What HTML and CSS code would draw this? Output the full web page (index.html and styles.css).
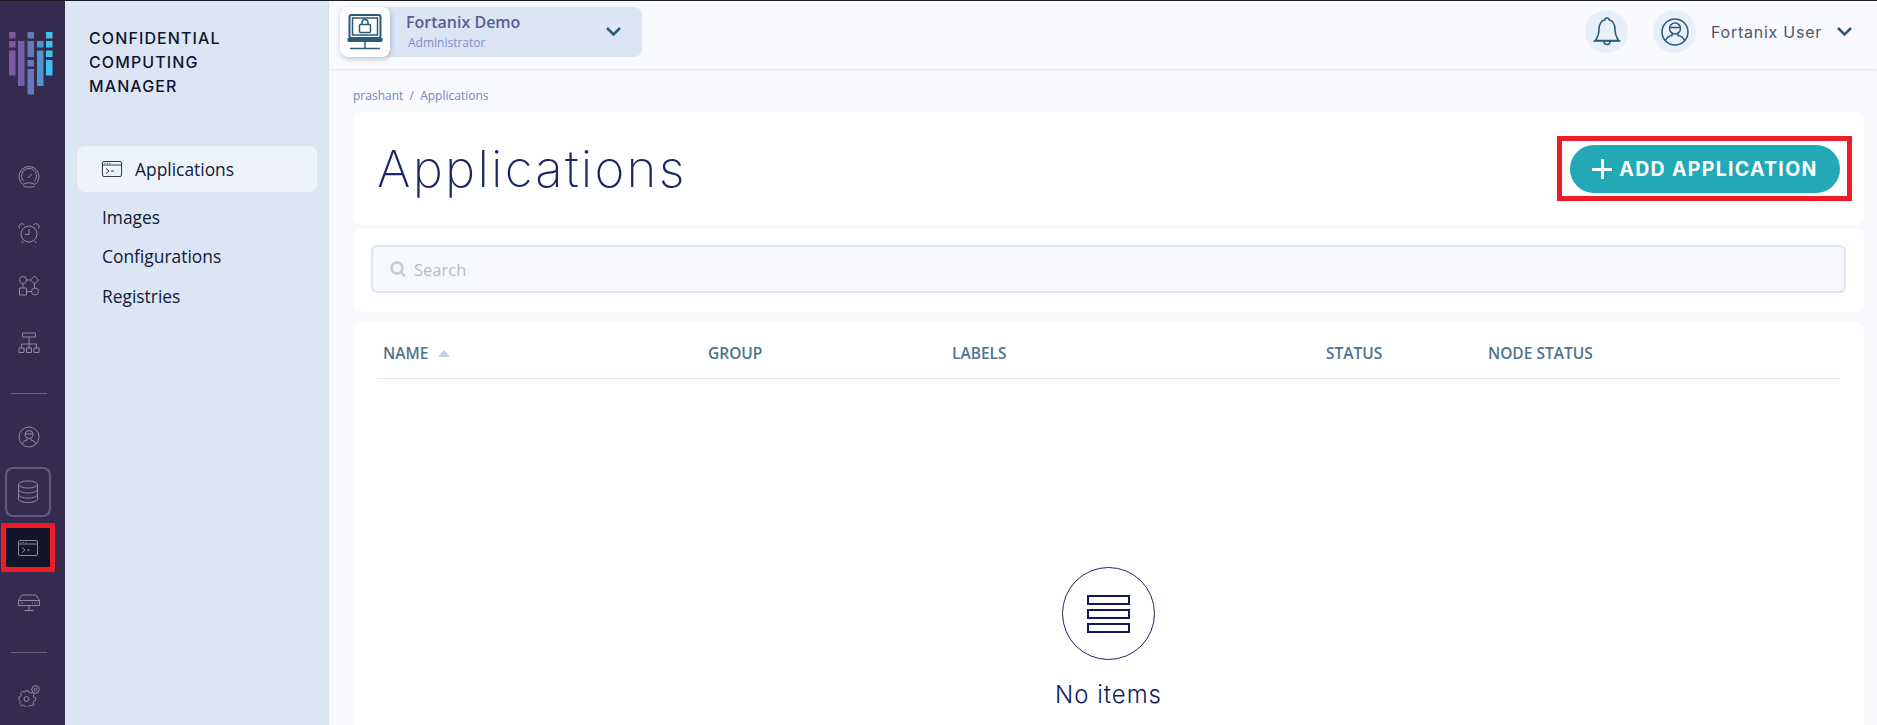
FILE: index.html
```html
<!DOCTYPE html>
<html lang="en">
<head>
  <meta charset="UTF-8">
  <meta name="viewport" content="width=device-width, initial-scale=1.0">
  <link rel="stylesheet" href="styles.css">
  <title>Applications</title>
</head>
<body>

<div class="app">
  <!-- Icon rail -->
  <nav class="rail">
    <svg class="logo" viewBox="0 0 44 63" width="44" height="63">
      <rect x="0" y="0" width="6.5" height="6.5" fill="#7d59a4"/>
      <rect x="0" y="9" width="6.5" height="6.5" fill="#7d59a4"/>
      <rect x="0" y="18.5" width="6.5" height="25" fill="#7d59a4"/>
      <rect x="9" y="9" width="6.5" height="45" fill="#7261aa"/>
      <rect x="18.5" y="0" width="6.5" height="6.5" fill="#6a78ba"/>
      <rect x="18.5" y="9" width="6.5" height="16" fill="#6a78ba"/>
      <rect x="18.5" y="28" width="6.5" height="6.5" fill="#6a78ba"/>
      <rect x="18.5" y="37" width="6.5" height="25.5" fill="#6a78ba"/>
      <rect x="28" y="9" width="6.5" height="6.5" fill="#4f94cc"/>
      <rect x="28" y="18.5" width="6.5" height="35.5" fill="#4f94cc"/>
      <rect x="37" y="0" width="6.5" height="6.5" fill="#3fc0ee"/>
      <rect x="37" y="9" width="6.5" height="6.5" fill="#3fc0ee"/>
      <rect x="37" y="18.5" width="6.5" height="6.5" fill="#3fc0ee"/>
      <rect x="37" y="28" width="6.5" height="15.5" fill="#3fc0ee"/>
    </svg>

    <div class="rail-item rail-gauge">
      <svg viewBox="0 0 22 22" width="22" height="22">
        <path d="M5 18.5a10 10 0 1 1 12 0"/>
        <path d="M6 15.5a7.5 7.5 0 1 1 10 0"/>
        <path d="M10 12l4-4M5 18.5q6-3.500 12 0M5.500 20.500q5.500 1.500 11 0"/>
      </svg>
    </div>
    <div class="rail-item">
      <svg viewBox="0 0 22 22" width="22" height="22">
        <circle cx="11" cy="12" r="8"/>
        <path d="M11 7v5.500H7M1.500 6.500a3 3 0 0 1 5-3.500M20.500 6.500a3 3 0 0 0-5-3.500M5 19l-1 2M17 19l1 2"/>
      </svg>
    </div>
    <div class="rail-item rail-flow">
      <svg viewBox="0 0 22 22" width="22" height="22">
        <circle cx="5" cy="5" r="3.500"/>
        <path d="M16.500 1l4 4-4 4-4-4zM1.500 13h7v7h-7zM8.500 5h4M8.500 16.500h5M5 8.500V13M16.500 9v4"/>
        <circle cx="17" cy="16.500" r="3.500"/>
      </svg>
    </div>
    <div class="rail-item rail-org">
      <svg viewBox="0 0 22 22" width="22" height="22">
        <path d="M4.500 1h13v4h-13zM11 5v11M3.500 16v-4h15v4M1 16h5v4.500H1zM8.500 16h5v4.500h-5zM16 16h5v4.500h-5z"/>
      </svg>
    </div>

    <div class="rail-line"></div>

    <div class="rail-item">
      <svg viewBox="0 0 22 22" width="22" height="22">
        <circle cx="11" cy="11" r="10"/>
        <circle cx="11" cy="8.500" r="4"/>
        <path d="M7 8h8M9 12.500v1.500q-4 .5-5 4M13 12.500v1.500q4 .5 5 4"/>
      </svg>
    </div>
    <div class="rail-box">
      <svg viewBox="0 0 22 24" width="22" height="24">
        <ellipse cx="11" cy="4.500" rx="9.500" ry="3.500"/>
        <path d="M1.500 4.500v14.500c0 2 4.500 3.500 9.500 3.500s9.500-1.500 9.500-3.500V4.500M1.500 9.500c0 2 4.500 3.500 9.500 3.500s9.500-1.500 9.500-3.500M1.500 14.500c0 2 4.500 3.500 9.500 3.500s9.500-1.500 9.500-3.500"/>
      </svg>
    </div>
    <div class="rail-marked">
      <div class="rail-active">
        <svg viewBox="0 0 20 16" width="20" height="16">
          <rect x="0.500" y="0.500" width="19" height="15" rx="1.500"/>
          <path d="M0.500 4h19M4 7.500l3 2.500-3 2.500M9 10h3M2.500 2.300h1M5 2.300h1M7.500 2.300h1"/>
        </svg>
      </div>
    </div>
    <div class="rail-item rail-server">
      <svg viewBox="0 0 22 18" width="22" height="18">
        <path d="M0.500 6.500L4 1h14l3.500 5.500v5h-21zM0.500 6.500h21M11 11.500v5M6.500 16.500h9M3 9h2M14 9h1M16.500 9h1M19 9h1"/>
      </svg>
    </div>

    <div class="rail-line"></div>

    <div class="rail-item">
      <svg viewBox="0 0 22 22" width="22" height="22">
        <circle cx="8.500" cy="14" r="2.500"/>
        <path d="M7 6.500h3l.5 1.800 1.600.7 1.700-.9 2.100 2.100-.9 1.700.7 1.600 1.800.5v3l-1.800.5-.7 1.600.9 1.700-2.100 1.700-1.700-.6-1.600.7-.5 1.300H7l-.5-1.500-1.600-.7-1.700.7-2.100-2.100.9-1.700-.7-1.600L.5 16v-3l1.800-.5.7-1.600-.9-1.700 2.100-2.100 1.700.9 1.600-.7z" transform="translate(.5 -.5) scale(.98 .95)"/>
        <circle cx="17.500" cy="4.500" r="3.800"/>
        <circle cx="17.500" cy="4.500" r="1.500"/>
      </svg>
    </div>
  </nav>

  <!-- Section menu -->
  <aside class="panel">
    <div class="panel-title">CONFIDENTIAL<br>COMPUTING<br>MANAGER</div>
    <ul class="menu">
      <li class="menu-item menu-item-active">
        <svg viewBox="0 0 20 16" width="20" height="16">
          <rect x="0.500" y="0.500" width="19" height="15" rx="1.500"/>
          <path d="M0.500 4h19M4 7.500l3 2.500-3 2.500M9 10h3M2.500 2.300h1M5 2.300h1M7.500 2.300h1"/>
        </svg>
        Applications
      </li>
      <li class="menu-item">Images</li>
      <li class="menu-item">Configurations</li>
      <li class="menu-item">Registries</li>
    </ul>
  </aside>

  <div class="main">
    <header class="topbar">
      <div class="tenant">
        <div class="tenant-icon">
          <svg viewBox="0 0 36 36" width="36" height="36">
            <rect x="2.500" y="1" width="31" height="23" rx="2" class="thick"/>
            <rect x="5.500" y="4" width="25" height="17" class="thin"/>
            <rect x="12.500" y="10.500" width="11" height="8" rx="1" class="thin"/>
            <path d="M15 10.500V8.500a3 3 0 0 1 6 0v2" class="thin"/>
            <path d="M0.500 24h35v2.500a1.500 1.500 0 0 1-1.500 1.500H2a1.500 1.500 0 0 1-1.500-1.500z" class="solid"/>
            <path d="M18 28v6M3 34.500h30" class="thin"/>
          </svg>
        </div>
        <div class="tenant-text">
          <div class="tenant-name">Fortanix Demo</div>
          <div class="tenant-role">Administrator</div>
        </div>
        <svg class="chevron tenant-chevron" viewBox="0 0 15 10" width="15" height="10"><path d="M1 1l6.500 6.500L14 1"/></svg>
      </div>
      <div class="user-area">
        <div class="round-icon">
          <svg viewBox="0 0 30 30" width="30" height="30">
            <path d="M15 1c-1.500 0-2 .8-2 1.700C8 4 7 8 7 12.500c0 5-1.500 8-3.500 11h23C24.500 20.500 23 17.500 23 12.500c0-4.500-1-8.500-6-9.800 0-.9-.5-1.700-2-1.700z"/>
            <path d="M1.500 24h27M12 24.500a3 3 0 0 0 6 0"/>
          </svg>
        </div>
        <div class="round-icon round-icon-user">
          <svg viewBox="0 0 28 28" width="28" height="28">
            <circle cx="14" cy="14" r="13"/>
            <circle cx="14" cy="10.500" r="5.500"/>
            <path d="M8.500 9.500h11M11 15.500v2q-5 .8-6.500 5M17 15.500v2q5 .8 6.500 5"/>
          </svg>
        </div>
        <span class="user-name">Fortanix User</span>
        <svg class="chevron" viewBox="0 0 15 10" width="15" height="10"><path d="M1 1l6.500 6.500L14 1"/></svg>
      </div>
    </header>

    <div class="content">
      <div class="crumbs">prashant &nbsp;/&nbsp; Applications</div>

      <section class="card title-card">
        <h1>Applications</h1>
        <div class="marked">
          <button class="add-btn"><span class="plus"></span>ADD APPLICATION</button>
        </div>
      </section>

      <section class="card search-card">
        <div class="search">
          <svg viewBox="0 0 16 16" width="16" height="16"><circle cx="7" cy="7" r="5.500"/><path d="M11 11l4 4.500"/></svg>
          <span>Search</span>
        </div>
      </section>

      <section class="card table-card">
        <div class="table-head">
          <div class="th">NAME <span class="sort"></span></div>
          <div class="th">GROUP</div>
          <div class="th">LABELS</div>
          <div class="th">STATUS</div>
          <div class="th">NODE STATUS</div>
        </div>
        <div class="empty">
          <div class="empty-circle">
            <span></span><span></span><span></span>
          </div>
          <div class="empty-text">No items</div>
        </div>
      </section>
    </div>
  </div>
</div>

</body>
</html>
```
FILE: styles.css
```css
* {
  box-sizing: border-box;
}

html, body {
  height: 100%;
}

body {
  margin: 0;
  overflow: hidden;
  font-family: 'Open Sans', sans-serif;
  background-color: #f8f9fd;
  border-top: 1px solid #1c1c22;
}

.app {
  display: flex;
  height: 724px;
}

/* Icon rail */
.rail {
  width: 65px;
  flex-shrink: 0;
  background-color: #342b4f;
  display: flex;
  flex-direction: column;
  align-items: flex-start;
}

.rail svg {
  fill: none;
  stroke: #8f8aa6;
  stroke-width: 1;
}

.rail svg.logo {
  stroke: none;
  margin: 31px 0 0 9px;
}

.rail-item {
  height: 56px;
  width: 57px;
  flex-shrink: 0;
  display: flex;
  align-items: center;
  justify-content: center;
}

.rail-gauge {
  margin-top: 54px;
}

.rail-flow {
  height: 50px;
}

.rail-org {
  height: 64px;
}

.rail-line {
  width: 36px;
  height: 1px;
  flex-shrink: 0;
  background-color: #6a6482;
  margin: 18px 0 15px 11px;
}

.rail-box {
  width: 46px;
  height: 50px;
  flex-shrink: 0;
  margin: 2px 0 0 5px;
  border: 2px solid #625c7b;
  border-radius: 8px;
  display: flex;
  align-items: center;
  justify-content: center;
}

.rail-marked {
  width: 54px;
  height: 49px;
  flex-shrink: 0;
  margin: 6px 0 0 1px;
  border: 5px solid #ee1c25;
}

.rail-active {
  height: 100%;
  background-color: #14142a;
  display: flex;
  align-items: center;
  justify-content: center;
}

.rail-server {
  height: 62px;
}

/* Section menu */
.panel {
  width: 264px;
  flex-shrink: 0;
  background-color: #dce5f4;
  padding: 25px 12px 0;
}

.panel-title {
  margin-left: 12px;
  font-family: 'Inter', sans-serif;
  font-size: 16px;
  font-weight: 500;
  letter-spacing: 1.1px;
  line-height: 24px;
  color: #101530;
}

.menu {
  list-style: none;
  margin: 48px 0 0;
  padding: 0;
}

.menu-item {
  height: 39.5px;
  padding-left: 25px;
  display: flex;
  align-items: center;
  font-size: 17.4px;
  font-weight: 500;
  color: #101a38;
}

.menu-item-active {
  height: 46px;
  margin-bottom: 5px;
  background-color: #eef3fb;
  border-radius: 8px;
  gap: 13px;
}

.menu-item svg {
  fill: none;
  stroke: #333a4f;
  stroke-width: 1;
}

/* Top bar */
.main {
  flex: 1;
  min-width: 0;
  display: flex;
  flex-direction: column;
}

.topbar {
  height: 68px;
  flex-shrink: 0;
  padding: 6px 25px 0 11px;
  display: flex;
  align-items: flex-start;
  justify-content: space-between;
  box-shadow: 0 1px 2px rgba(80, 100, 140, 0.15);
}

.tenant {
  width: 302px;
  height: 50px;
  background-color: #dce5f4;
  border-radius: 8px;
  display: flex;
  align-items: center;
}

.tenant-icon {
  width: 50px;
  height: 50px;
  background-color: #fff;
  border-radius: 8px;
  box-shadow: 1px 2px 5px rgba(60, 70, 100, 0.3);
  display: flex;
  align-items: center;
  justify-content: center;
}

.tenant-icon svg {
  fill: none;
  stroke: #2b5a78;
}

.tenant-icon .thick {
  stroke-width: 2;
}

.tenant-icon .thin {
  stroke-width: 1.5;
}

.tenant-icon .solid {
  fill: #2b5a78;
  stroke: none;
}

.tenant-text {
  margin: -1px 0 0 16px;
  flex: 1;
}

.tenant-name {
  font-size: 16px;
  font-weight: 600;
  line-height: 20px;
  color: #56608f;
}

.tenant-role {
  margin: 3px 0 0 2px;
  font-size: 12px;
  line-height: 16px;
  color: #7f8cc7;
}

.chevron {
  fill: none;
  stroke: #2b5a78;
  stroke-width: 2.5;
  flex-shrink: 0;
}

.tenant-chevron {
  margin-right: 21px;
}

.user-area {
  display: flex;
  align-items: center;
  margin-top: 3px;
}

.round-icon {
  width: 43px;
  height: 43px;
  border-radius: 50%;
  background-color: #e9eff8;
  display: flex;
  align-items: center;
  justify-content: center;
  margin-right: 25px;
}

.round-icon svg {
  fill: none;
  stroke: #2b5a78;
  stroke-width: 1.5;
}

.round-icon-user {
  margin-right: 15px;
}

.user-name {
  font-family: 'Inter', sans-serif;
  font-size: 16px;
  letter-spacing: 0.75px;
  color: #50556a;
  margin-right: 15px;
}

/* Content */
.content {
  flex: 1;
  min-height: 0;
  padding: 0 13px 0 24px;
  display: flex;
  flex-direction: column;
}

.crumbs {
  height: 43px;
  padding-top: 19px;
  font-size: 12px;
  line-height: 16px;
  color: #7484c0;
}

.card {
  background-color: #fff;
  border-radius: 8px;
}

.title-card {
  height: 113px;
  flex-shrink: 0;
  padding: 0 12px 0 24px;
  display: flex;
  align-items: center;
  justify-content: space-between;
}

.title-card h1 {
  margin: 0;
  font-family: 'Inter', sans-serif;
  font-size: 51px;
  font-weight: 200;
  letter-spacing: 2.2px;
  color: #1c2566;
}

.marked {
  border: 5px solid #ee1c25;
  padding: 4px 7px 3px 8px;
  width: 295px;
  height: 65px;
}

.add-btn {
  width: 100%;
  height: 100%;
  border: none;
  border-radius: 24px;
  background-color: #22a9b5;
  color: #fff;
  font-family: 'Inter', sans-serif;
  font-size: 19.5px;
  font-weight: 700;
  letter-spacing: 1.3px;
  display: flex;
  align-items: center;
  justify-content: center;
  gap: 7px;
  padding: 0;
}

.plus {
  width: 20px;
  height: 20px;
  background:
    linear-gradient(#fff, #fff) center / 100% 3px no-repeat,
    linear-gradient(#fff, #fff) center / 3px 100% no-repeat;
}

.search-card {
  height: 84px;
  flex-shrink: 0;
  margin-top: 3px;
  padding: 17px 18px 0;
}

.search {
  height: 48px;
  background-color: #f6f8fc;
  border: 2px solid #dce5f4;
  border-radius: 6px;
  display: flex;
  align-items: center;
  padding-left: 17px;
  gap: 8px;
  font-size: 16.5px;
  color: #b4bcc9;
}

.search svg {
  fill: none;
  stroke: #c0cdd8;
  stroke-width: 2.5;
}

.table-card {
  flex: 1;
  margin-top: 10px;
  padding: 0 24px;
  border-radius: 8px 8px 0 0;
}

.table-head {
  height: 57px;
  padding: 6px 0 0 6px;
  display: grid;
  grid-template-columns: 325px 244px 374px 162px 1fr;
  align-items: center;
  border-bottom: 1px solid #dce5f4;
}

.th {
  font-size: 15.5px;
  font-weight: 600;
  color: #4d7390;
}

.sort {
  display: inline-block;
  margin: 0 0 2px 6px;
  border-left: 6px solid transparent;
  border-right: 6px solid transparent;
  border-bottom: 7px solid #c0d0dc;
}

.empty {
  display: flex;
  flex-direction: column;
  align-items: center;
  padding-top: 188px;
}

.empty-circle {
  width: 93px;
  height: 93px;
  border: 1.5px solid #1c2566;
  border-radius: 50%;
  display: flex;
  flex-direction: column;
  align-items: center;
  justify-content: center;
  gap: 4px;
}

.empty-circle span {
  width: 43px;
  height: 10px;
  border: 2.5px solid #0f1a5c;
}

.empty-text {
  margin-top: 20px;
  font-family: 'Inter', sans-serif;
  font-size: 24px;
  font-weight: 300;
  letter-spacing: 1px;
  color: #0f1a5c;
}
```
